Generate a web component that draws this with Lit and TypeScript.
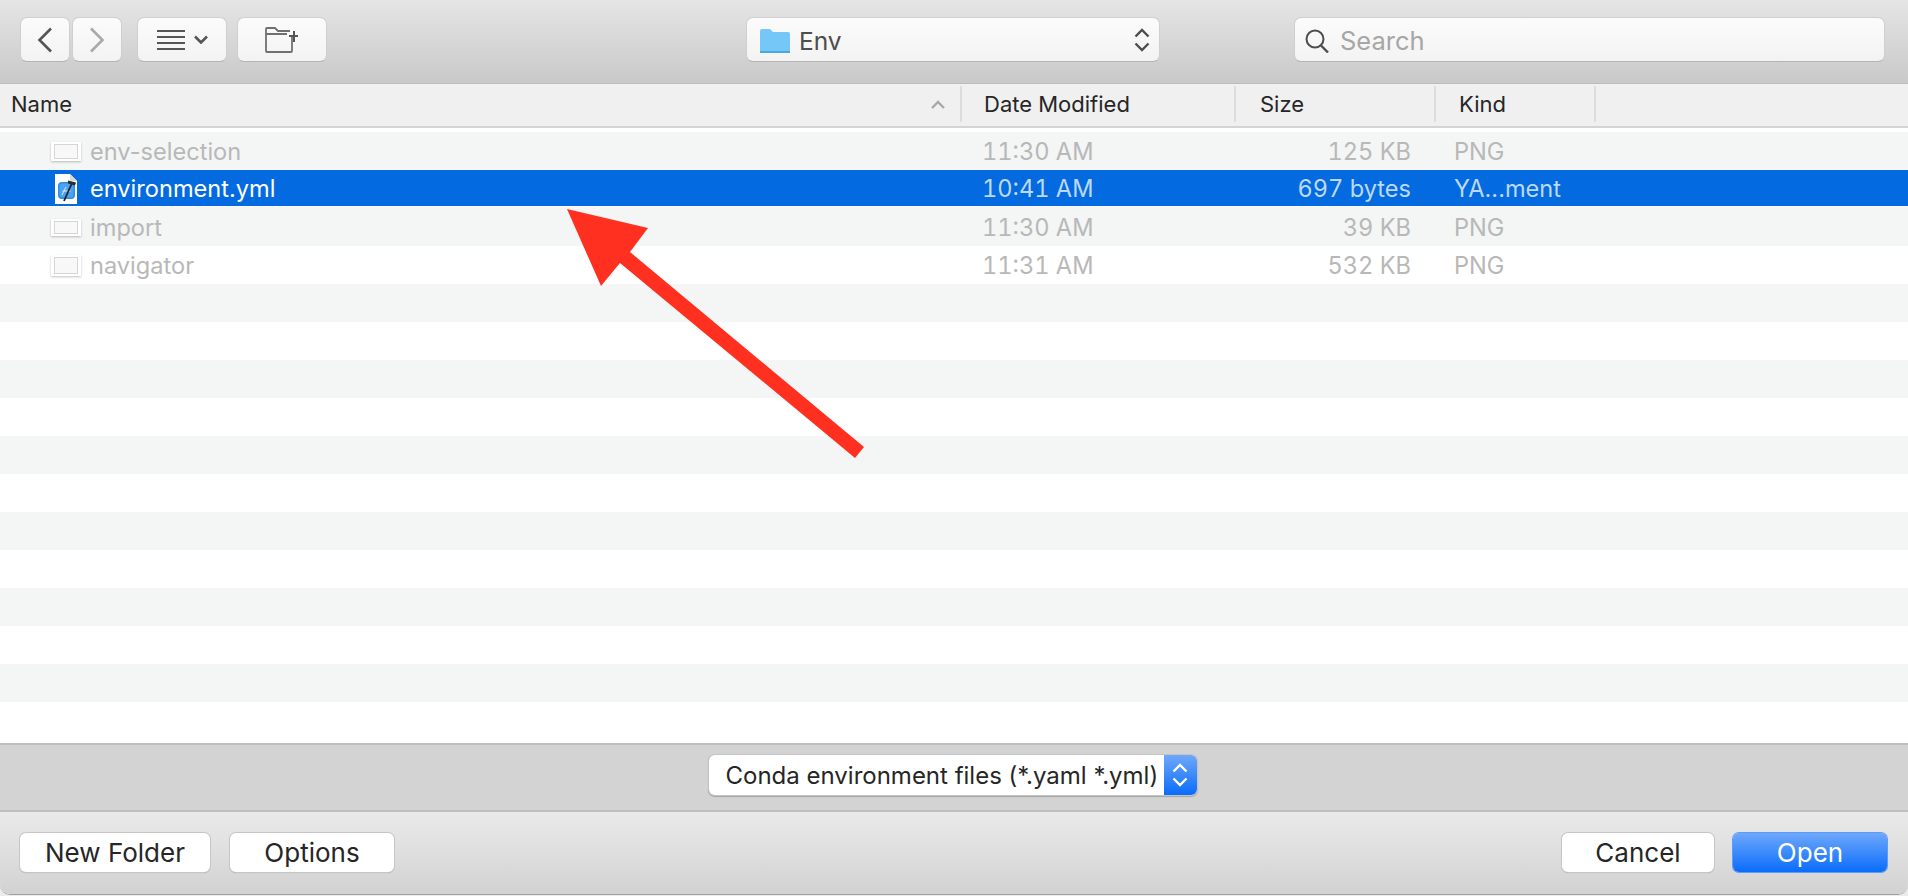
import { LitElement, css, html, nothing } from 'lit';
import { customElement } from 'lit/decorators.js';

interface FileRow {
    name: string;
    date: string;
    size: string;
    kind: string;
    icon: 'shot' | 'dialog' | 'nav' | 'yaml';
    selected?: boolean;
}

const FILES: FileRow[] = [
    { name: 'env-selection', date: '11:30 AM', size: '125 KB', kind: 'PNG', icon: 'shot' },
    { name: 'environment.yml', date: '10:41 AM', size: '697 bytes', kind: 'YA...ment', icon: 'yaml', selected: true },
    { name: 'import', date: '11:30 AM', size: '39 KB', kind: 'PNG', icon: 'dialog' },
    { name: 'navigator', date: '11:31 AM', size: '532 KB', kind: 'PNG', icon: 'nav' }
];

const EMPTY_ROWS = 12;

@customElement('app-root')
export class AppRoot extends LitElement {
    static styles = css`
        :host {
            display: block;
            position: relative;
            width: 1908px;
            height: 896px;
            overflow: hidden;
            background: #ececec;
            font-family: Inter, 'Liberation Sans', sans-serif;
            font-size: 22px;
            color: #262626;
        }

        .window {
            display: flex;
            flex-direction: column;
            height: 895px;
            border-radius: 0 0 10px 10px;
            overflow: hidden;
            background: #fff;
            border-bottom: 1px solid #a0a0a0;
            box-sizing: border-box;
        }

        .toolbar {
            display: flex;
            align-items: flex-start;
            box-sizing: border-box;
            height: 84px;
            padding: 17px 23px 0 20px;
            background: linear-gradient(#e5e5e5, #c9c9c9);
            border-bottom: 1px solid #bdbdbd;
            flex: none;
        }

        .tool {
            display: flex;
            align-items: center;
            justify-content: center;
            box-sizing: border-box;
            height: 45px;
            background: linear-gradient(#fbfbfb, #f3f3f3);
            border: 1px solid #cfcfcf;
            border-bottom-color: #b4b4b4;
            border-radius: 7px;
        }

        .nav {
            width: 50px;
            margin-right: 2px;
        }

        .view {
            width: 90px;
            margin-left: 13px;
            margin-right: 10px;
            gap: 9px;
        }

        .new-folder {
            width: 90px;
        }

        .path {
            width: 414px;
            margin-left: 419px;
            padding: 2px 8px 0 13px;
            justify-content: flex-start;
            font-size: 24.5px;
            color: #4d4d4d;
            gap: 9px;
        }

        .path .stepper {
            display: flex;
            margin-left: auto;
            margin-top: -2px;
        }

        .search {
            width: 591px;
            margin-left: 134px;
            padding: 2px 0 0 10px;
            justify-content: flex-start;
            gap: 11px;
            font-size: 25.5px;
            color: #a6a6a6;
        }

        .header,
        .row {
            display: grid;
            grid-template-columns: 962px 274px 200px 160px 1fr;
            align-items: center;
        }

        .header {
            box-sizing: border-box;
            height: 44px;
            background: #f0f0f0;
            border-bottom: 2px solid #d4d4d4;
            flex: none;
        }

        .header > div {
            display: flex;
            align-items: center;
            box-sizing: border-box;
            height: 36px;
            margin-bottom: 2px;
            border-right: 2px solid #dcdcdc;
        }

        .header > div:last-child {
            border-right: none;
        }

        .h-name {
            padding: 0 15px 0 11px;
            justify-content: space-between;
        }

        .h-date {
            padding-left: 22px;
        }

        .h-size {
            padding-left: 24px;
        }

        .h-kind {
            padding-left: 23px;
        }

        .list {
            flex: 1;
            padding-top: 4px;
            min-height: 0;
        }

        .row {
            height: 38px;
            padding-top: 1px;
            box-sizing: border-box;
            font-size: 23.6px;
            color: #b8b8b8;
        }

        .row:nth-child(odd) {
            background: #f4f5f5;
        }

        .row.selected {
            height: 37px;
            background: #046ae0;
            border-bottom: 1px solid #fff;
            color: #bcd9f9;
        }

        .row.selected + .row {
            height: 39px;
            background: #f4f5f5;
        }

        .row.selected .c-name {
            color: #fff;
        }

        .row:nth-child(n + 4):nth-child(even) {
            background: #fff;
        }

        .c-name {
            display: flex;
            align-items: center;
            padding-left: 51px;
        }

        .icon {
            display: flex;
            justify-content: center;
            width: 30px;
            margin-right: 9px;
        }

        .icon svg {
            overflow: visible;
        }

        .thumb {
            filter: drop-shadow(0 1px 1px rgba(0, 0, 0, 0.24));
        }

        .c-date {
            padding-left: 20px;
            font-variant-numeric: tabular-nums;
        }

        .c-size {
            padding-right: 25px;
            text-align: right;
            font-variant-numeric: tabular-nums;
        }

        .c-kind {
            padding-left: 18px;
        }

        .accessory {
            display: flex;
            align-items: flex-start;
            justify-content: center;
            box-sizing: border-box;
            height: 69px;
            padding-top: 10px;
            background: #d3d3d3;
            border-top: 2px solid #bfbfbf;
            border-bottom: 2px solid #bfbfbf;
            flex: none;
        }

        .filter {
            display: flex;
            box-sizing: border-box;
            width: 488px;
            height: 40px;
            margin-left: -3px;
            background: #fff;
            border-radius: 6px;
            box-shadow: 0 0 0 1px #c4c4c4, 0 1px 1px 1px rgba(0, 0, 0, 0.22);
            overflow: hidden;
            font-size: 24px;
        }

        .filter span {
            flex: 1;
            align-self: center;
            padding-left: 17px;
            white-space: nowrap;
        }

        .filter .arrows {
            display: flex;
            align-items: center;
            justify-content: center;
            width: 33px;
            background: linear-gradient(#6ea8fb, #0a6cfb);
            flex: none;
        }

        .footer {
            display: flex;
            align-items: flex-start;
            box-sizing: border-box;
            height: 82px;
            padding: 21px 21px 0 20px;
            background: linear-gradient(#eaeaea, #d2d2d2);
            flex: none;
            font-size: 26px;
        }

        .btn {
            display: flex;
            align-items: center;
            justify-content: center;
            box-sizing: border-box;
            height: 39px;
            background: #fff;
            border-radius: 6px;
            box-shadow: 0 0 0 1px #c6c6c6, 0 1px 1px rgba(0, 0, 0, 0.3);
        }

        .btn.new {
            width: 190px;
            margin-right: 20px;
        }

        .btn.options {
            width: 164px;
        }

        .btn.cancel {
            width: 152px;
            margin-left: auto;
            margin-right: 19px;
        }

        .btn.open {
            width: 154px;
            color: #fff;
            background: linear-gradient(#6ea8fb, #0a6cfb);
            box-shadow: 0 0 0 1px #5b9cf8;
        }

        .pointer {
            position: absolute;
            left: 0;
            top: 0;
            pointer-events: none;
        }
    `;

    private chevrons(color: string) {
        return html`<svg width="18" height="26" viewBox="0 0 18 26" fill="none" stroke=${color} stroke-width="2.4">
            <path d="M2.5 9.5 9 3l6.5 6.5M2.5 16.5 9 23l6.5-6.5" />
        </svg>`;
    }

    private fileIcon(kind: FileRow['icon']) {
        if (kind === 'yaml') {
            return html`<svg width="24" height="30" viewBox="0 0 24 30">
                <path d="M1 0h15l7 7v23H1z" fill="#fff" />
                <path d="M16 0l7 7h-7z" fill="#d8d8d8" />
                <rect x="4" y="8" width="17" height="17" rx="4" fill="#2f8bea" />
                <rect x="5.500" y="9.500" width="14" height="14" rx="3" fill="#4aa3f2" />
                <path d="M8 21l4-8M13 20l2-4M8.500 17h8" stroke="#d6ecff" stroke-width="1" fill="none" />
                <path d="M10 27 18 9" stroke="#222" stroke-width="1.800" />
                <path d="M14 6.500l8 2-1 3-7-2z" fill="#2b2b2b" />
            </svg>`;
        }

        const heights = { shot: 19, dialog: 17, nav: 21 };
        const h = heights[kind];
        return html`<svg class="thumb" width="30" height=${h} viewBox="0 0 30 ${h}">
            <rect width="30" height=${h} fill="#fff" />
            <rect x="3.500" y="2.500" width="23" height=${h - 5} fill="#f8f8f8" stroke="#d6d6d6" />
            ${kind === 'shot'
                ? html`<rect x="4" y="3" width="22" height="4" fill="#d3e0f4" />
                      <rect x="4" y="7" width="22" height="8" fill="#f2f5f9" />`
                : nothing}
            ${kind === 'dialog'
                ? html`<rect x="4" y="3" width="22" height="2" fill="#b4b4b4" />
                      <rect x="6" y="8" width="11" height="1" fill="#d4d4d4" />
                      <rect x="21" y="10" width="4" height="2" fill="#c4c4c4" />`
                : nothing}
            ${kind === 'nav'
                ? html`<rect x="5" y="4" width="7" height="13" fill="#e8e8e8" />
                      <rect x="14" y="7" width="9" height="1" fill="#d8d8d8" />
                      <rect x="14" y="11" width="7" height="1" fill="#d8d8d8" />
                      <rect x="14" y="14" width="8" height="1" fill="#d8d8d8" />`
                : nothing}
        </svg>`;
    }

    private renderRow(file?: FileRow) {
        if (!file) {
            return html`<div class="row"></div>`;
        }

        return html`<div class="row ${file.selected ? 'selected' : ''}">
            <div class="c-name">
                <span class="icon">${this.fileIcon(file.icon)}</span>
                <span>${file.name}</span>
            </div>
            <div class="c-date">${file.date}</div>
            <div class="c-size">${file.size}</div>
            <div class="c-kind">${file.kind}</div>
            <div></div>
        </div>`;
    }

    render() {
        return html`<div class="window">
                <div class="toolbar">
                    <div class="tool nav">
                        <svg width="16" height="26" viewBox="0 0 16 26" fill="none" stroke="#555" stroke-width="2.6">
                            <path d="M14 1.500 2.500 13 14 24.500" />
                        </svg>
                    </div>
                    <div class="tool nav">
                        <svg width="16" height="26" viewBox="0 0 16 26" fill="none" stroke="#a9a9a9" stroke-width="2.6">
                            <path d="M2 1.500 13.500 13 2 24.500" />
                        </svg>
                    </div>
                    <div class="tool view">
                        <svg width="28" height="22" viewBox="0 0 28 22" stroke="#555" stroke-width="2">
                            <path d="M0 2h28M0 8h28M0 14h28M0 20h28" />
                        </svg>
                        <svg width="14" height="9" viewBox="0 0 14 9" fill="none" stroke="#555" stroke-width="2.600">
                            <path d="M1 1.500 7 7.500 13 1.500" />
                        </svg>
                    </div>
                    <div class="tool new-folder">
                        <svg width="34" height="26" viewBox="0 0 34 26" fill="none" stroke="#707070" stroke-width="1.800">
                            <path d="M27 10v14a1 1 0 0 1-1 1H2a1 1 0 0 1-1-1V2a1 1 0 0 1 1-1h8l3 3h12M1 7h21" />
                            <path d="M29 4v11M24 9h9" stroke="#555" stroke-width="2" />
                        </svg>
                    </div>
                    <div class="tool path">
                        <svg width="30" height="24" viewBox="0 0 30 24">
                            <path d="M0 2a2 2 0 0 1 2-2h8l3 3h15a2 2 0 0 1 2 2v17a2 2 0 0 1-2 2H2a2 2 0 0 1-2-2z" fill="#74c7f7" />
                            <rect y="22" width="30" height="2" fill="#4ea6e0" />
                        </svg>
                        <span>Env</span>
                        <span class="stepper">${this.chevrons('#4d4d4d')}</span>
                    </div>
                    <div class="tool search">
                        <svg width="24" height="24" viewBox="0 0 24 24" fill="none" stroke="#4d4d4d" stroke-width="2">
                            <circle cx="10" cy="10" r="8.500" />
                            <path d="M16 16.500 23 23.500" stroke-width="2.400" />
                        </svg>
                        <span>Search</span>
                    </div>
                </div>

                <div class="header">
                    <div class="h-name">
                        <span>Name</span>
                        <svg width="14" height="9" viewBox="0 0 14 9" fill="none" stroke="#a8a8a8" stroke-width="2.400">
                            <path d="M1 8 7 2l6 6" />
                        </svg>
                    </div>
                    <div class="h-date">Date Modified</div>
                    <div class="h-size">Size</div>
                    <div class="h-kind">Kind</div>
                    <div></div>
                </div>

                <div class="list">
                    ${FILES.map(file => this.renderRow(file))}
                    ${Array.from({ length: EMPTY_ROWS }, () => this.renderRow())}
                </div>

                <div class="accessory">
                    <div class="filter">
                        <span>Conda environment files (*.yaml *.yml)</span>
                        <div class="arrows">${this.chevrons('#fff')}</div>
                    </div>
                </div>

                <div class="footer">
                    <div class="btn new">New Folder</div>
                    <div class="btn options">Options</div>
                    <div class="btn cancel">Cancel</div>
                    <div class="btn open">Open</div>
                </div>
            </div>

            <svg class="pointer" width="1908" height="896" viewBox="0 0 1908 896">
                <path
                    d="M567 209 648 228 630 252 864 447 855 458 620 263 601 286Z"
                    fill="#ff3020"
                />
            </svg>`;
    }
}
